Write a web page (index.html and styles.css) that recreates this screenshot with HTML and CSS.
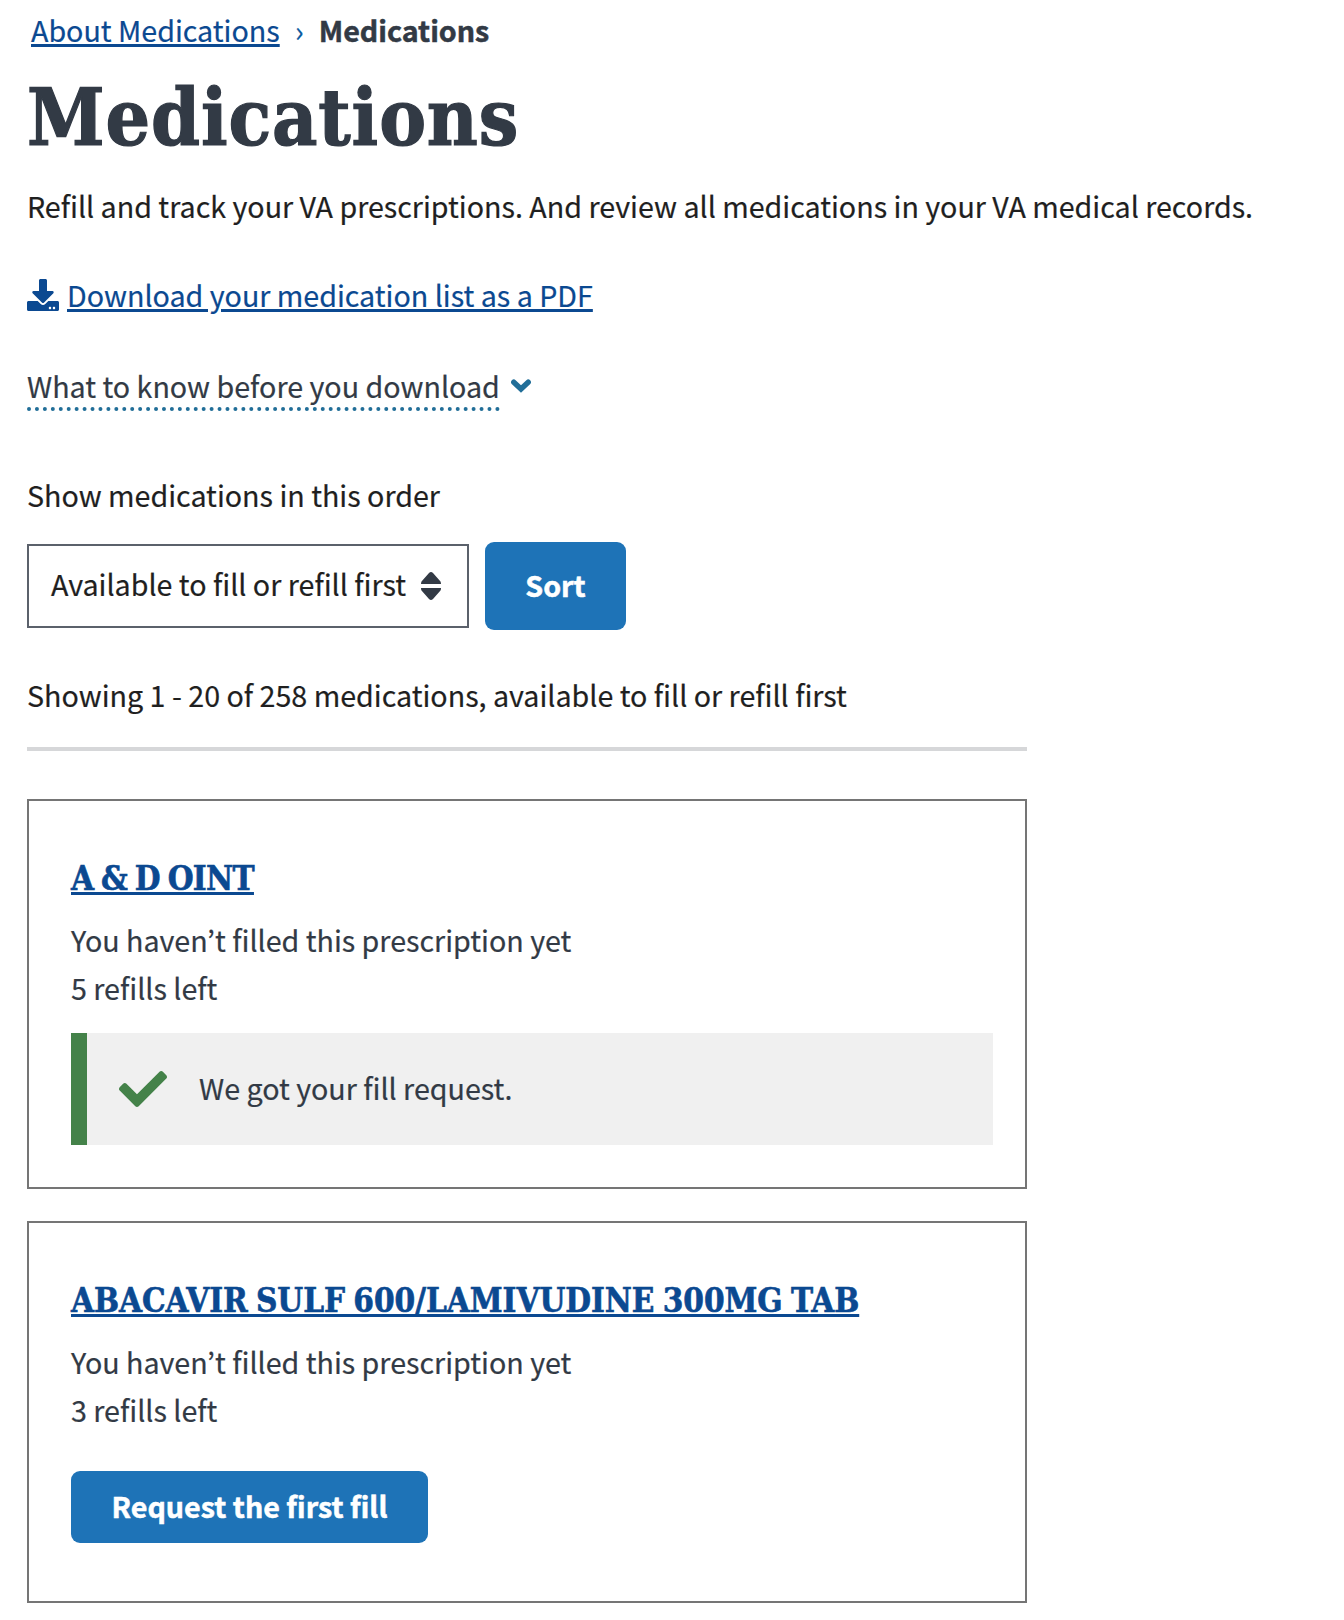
FILE: index.html
```html
<!DOCTYPE html>
<html lang="en">
<head>
<meta charset="utf-8">
<title>Medications</title>
<link rel="stylesheet" href="styles.css">
</head>
<body>
<main class="page">
  <nav class="breadcrumb" aria-label="Breadcrumb">
    <a class="link" href="#">About Medications</a>
    <span class="breadcrumb-sep">›</span>
    <span class="breadcrumb-current">Medications</span>
  </nav>

  <h1 class="title">Medications</h1>
  <p class="intro">Refill and track your VA prescriptions. And review all medications in your VA medical records.</p>

  <div class="download">
    <svg class="download-icon" viewBox="0 0 512 512" aria-hidden="true"><path fill="currentColor" d="M216 0h80c13.3 0 24 10.7 24 24v168h87.7c17.8 0 26.7 21.5 14.1 34.1L269.7 378.3c-7.5 7.5-19.8 7.5-27.3 0L90.1 226.1c-12.6-12.6-3.7-34.1 14.1-34.1H192V24c0-13.3 10.7-24 24-24zm296 376v112c0 13.3-10.7 24-24 24H24c-13.3 0-24-10.7-24-24V376c0-13.3 10.7-24 24-24h146.7l49 49c20.1 20.1 52.5 20.1 72.6 0l49-49H488c13.3 0 24 10.7 24 24zm-124 88c0-11-9-20-20-20s-20 9-20 20 9 20 20 20 20-9 20-20zm64 0c0-11-9-20-20-20s-20 9-20 20 9 20 20 20 20-9 20-20z"/></svg>
    <a class="link" href="#">Download your medication list as a PDF</a>
  </div>

  <div class="info">
    <span class="info-label">What to know before you download</span>
    <svg class="info-icon" viewBox="0 0 20 14" aria-hidden="true"><path fill="none" stroke="currentColor" stroke-width="5.4" stroke-linecap="round" stroke-linejoin="miter" d="M2.800 3.200 10 10 17.200 3.200"/></svg>
  </div>

  <p class="sort-label">Show medications in this order</p>
  <div class="sort-row">
    <div class="select">
      <span>Available to fill or refill first</span>
      <svg class="select-icon" viewBox="0 0 20 28" aria-hidden="true"><path fill="currentColor" d="M10 0Q11 0 12 1L19.500 9.500Q20 10.500 20 12H0Q0 10.500.5 9.500L8 1Q9 0 10 0zM10 28Q9 28 8 27L.5 18.500Q0 17.500 0 16H20Q20 17.500 19.500 18.500L12 27Q11 28 10 28z"/></svg>
    </div>
    <button class="button button-sort" type="button">Sort</button>
  </div>

  <p class="count">Showing 1 - 20 of 258 medications, available to fill or refill first</p>
  <hr class="rule">

  <section class="card">
    <h2 class="card-title card-title-tight"><a class="link" href="#">A &amp; D OINT</a></h2>
    <p>You haven’t filled this prescription yet</p>
    <p>5 refills left</p>
    <div class="alert">
      <svg class="alert-icon" viewBox="0 0 512 512" aria-hidden="true"><path fill="currentColor" d="M173.898 439.404l-166.400-166.400c-9.997-9.997-9.997-26.206 0-36.204l36.203-36.204c9.997-9.998 26.207-9.998 36.204 0L192 312.690 432.095 72.596c9.997-9.997 26.207-9.997 36.204 0l36.203 36.204c9.997 9.997 9.997 26.206 0 36.204l-294.400 294.401c-9.998 9.997-26.207 9.997-36.204-.001z"/></svg>
      <p class="alert-text">We got your fill request.</p>
    </div>
  </section>

  <section class="card card-action">
    <h2 class="card-title"><a class="link" href="#">ABACAVIR SULF 600/LAMIVUDINE 300MG TAB</a></h2>
    <p>You haven’t filled this prescription yet</p>
    <p>3 refills left</p>
    <button class="button button-fill" type="button">Request the first fill</button>
  </section>
</main>
</body>
</html>
```
FILE: styles.css
```css
* { box-sizing: border-box; }

body {
  margin: 0;
  background: #fff;
  color: #1f1f1f;
  font: 400 28.65px/48px "Noto Sans CJK JP", "Noto Sans", sans-serif;
  -webkit-text-stroke: 0.2px currentColor;
}

p, h1, h2 { margin: 0; }

.page { padding: 6px 27px 0; }

.link {
  color: #0b4991;
  text-decoration: underline;
  text-decoration-thickness: 3px;
  text-underline-offset: 2px;
}

.breadcrumb {
  display: flex;
  padding-left: 4px;
  white-space: nowrap;
}
.breadcrumb-sep { width: 39px; text-align: center; color: #0b5a9e; }
.breadcrumb-current {
  font-weight: 700;
  color: #323a45;
  -webkit-text-stroke-width: 0.5px;
}

.title {
  margin: 16px 0;
  font: 700 78px/96px "DejaVu Serif Condensed", "DejaVu Serif", serif;
  letter-spacing: 0.85px;
  color: #323a45;
  -webkit-text-stroke-width: 1.2px;
}

.intro { white-space: nowrap; }

.download {
  display: flex;
  align-items: center;
  gap: 8px;
  margin-top: 41px;
  color: #0b4991;
}
.download-icon { width: 32px; height: 32px; }

.info {
  display: flex;
  gap: 11px;
  margin-top: 45px;
  line-height: 43px;
  color: #323a45;
}
.info-label { border-bottom: 4px dotted #216e98; }
.info-icon { width: 20px; height: 14px; margin-top: 15px; color: #216e98; }

.sort-label { margin-top: 60px; }

.sort-row {
  display: flex;
  align-items: center;
  gap: 16px;
  margin-top: 23px;
}

.select {
  display: flex;
  align-items: center;
  justify-content: space-between;
  width: 442px;
  height: 84px;
  padding: 0 26px 0 22px;
  border: 2px solid #5b616b;
}
.select span { padding-bottom: 4px; }
.select-icon { width: 20px; height: 28px; color: #323a45; }

.button {
  padding: 0 0 2px;
  border: 0;
  border-radius: 9px;
  background: #1e73b7;
  color: #fff;
  font: inherit;
  font-weight: 700;
  -webkit-text-stroke: 0.5px #fff;
}
.button-sort { width: 141px; height: 88px; }
.button-fill { display: block; width: 357px; height: 72px; margin-top: 37px; }

.count { margin-top: 41px; }

.rule {
  height: 4px;
  margin: 28px 0 48px;
  border: 0;
  background: #d6d7d9;
}
.rule, .card { width: 1000px; }

.card {
  padding: 56px 32px 42px 42px;
  border: 2px solid #757575;
  color: #323a45;
}
.card-action { margin-top: 32px; padding-bottom: 58px; }

.card-title {
  margin-bottom: 15px;
  font: 700 33px/44px "DejaVu Serif Condensed", "DejaVu Serif", serif;
  letter-spacing: -0.05px;
  word-spacing: -2px;
  white-space: nowrap;
  -webkit-text-stroke-width: 0.6px;
}
.card-title-tight { letter-spacing: -0.66px; }

.alert {
  display: flex;
  align-items: center;
  gap: 32px;
  height: 112px;
  margin-top: 21px;
  padding-left: 32px;
  border-left: 16px solid #448249;
  background: #f0f0f0;
}
.alert-icon { width: 48px; height: 48px; color: #448249; }
.alert-text { padding-bottom: 2px; }
```
